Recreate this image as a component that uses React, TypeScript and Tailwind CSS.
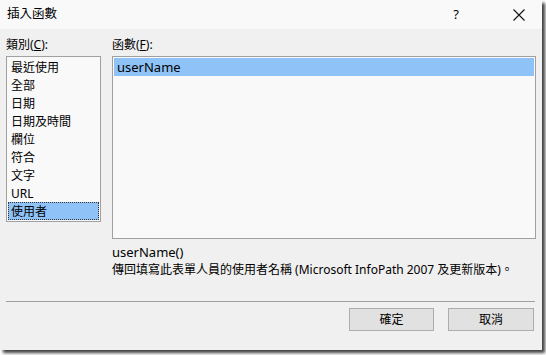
import React from "react";

const font = { fontFamily: '"Noto Sans", "Noto Sans CJK TC", sans-serif' };

const cats = ["最近使用", "全部", "日期", "日期及時間", "欄位", "符合", "文字", "URL", "使用者"];

export default function App() {
  return (
    <div className="w-[546px] h-[355px] bg-white relative overflow-hidden" style={font}>
      <div className="w-[542px] h-[350px] bg-[#f0f0f0] flex flex-col shadow-[3px_3px_3px_rgba(0,0,0,0.75)] text-[12px] text-black">
        <div className="h-[29px] bg-[#f9f9f9] flex items-center pl-[7px] shrink-0">
          <span className="text-[12.5px] leading-none">插入函數</span>
          <span className="ml-auto w-[20px] text-center text-[13px] leading-none mr-[47px]">?</span>
          <svg width="12" height="12" viewBox="0 0 12 12" className="mr-[17px]">
            <path d="M0.5 0.5 L11.5 11.5 M11.5 0.5 L0.5 11.5" stroke="#111" strokeWidth="1.1" />
          </svg>
        </div>
        <div className="flex px-[6px] pt-[8px] gap-[11px] shrink-0">
          <div className="flex flex-col w-[95px]">
            <div className="h-[19px] leading-[15px]">類別(<span className="underline">C</span>):</div>
            <div className="h-[166px] border border-[#a0a0a0] bg-[#f9f9f9] p-[1px] flex flex-col">
              {cats.map((c, i) => (
                <div
                  key={c}
                  className={
                    "h-[18px] leading-[19px] pl-[3px] " +
                    (i === cats.length - 1 ? "bg-[#8fc3f7] outline-1 outline-dotted outline-[#333] -outline-offset-1" : "")
                  }
                >
                  {c}
                </div>
              ))}
            </div>
          </div>
          <div className="flex flex-col w-[424px]">
            <div className="h-[19px] leading-[15px]">函數(<span className="underline">F</span>):</div>
            <div className="h-[183px] border border-[#a0a0a0] bg-[#f9f9f9] p-[1px]">
              <div className="h-[18px] leading-[19px] pl-[3px] bg-[#8fc3f7] text-[13px]">userName</div>
            </div>
          </div>
        </div>
        <div className="pl-[112px] pt-[4px] shrink-0">
          <div className="h-[18px] leading-[18px] text-[13px]">userName()</div>
          <div className="h-[18px] leading-[18px]">傳回填寫此表單人員的使用者名稱 (Microsoft InfoPath 2007 及更新版本)。</div>
        </div>
        <div className="mx-[6px] mt-[22px] h-px bg-[#a0a0a0] w-[529px] shrink-0" />
        <div className="flex justify-end gap-[14px] pr-[8px] pt-[6px]">
          <button className="w-[85px] h-[23px] border border-[#adadad] bg-[#e1e1e1] text-[12px] leading-none">確定</button>
          <button className="w-[86px] h-[23px] border border-[#adadad] bg-[#e1e1e1] text-[12px] leading-none">取消</button>
        </div>
      </div>
    </div>
  );
}
